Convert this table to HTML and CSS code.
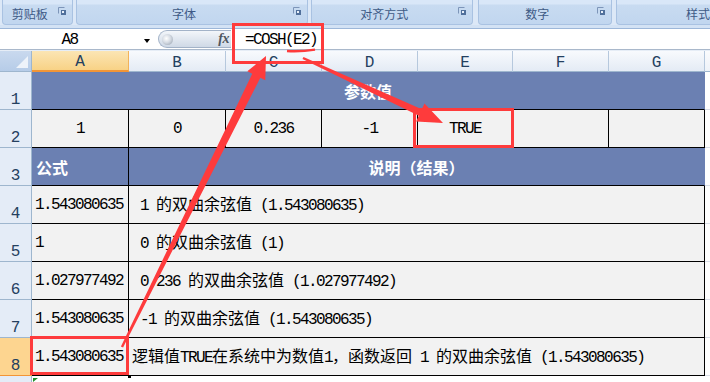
FILE: index.html
```html
<!DOCTYPE html>
<html lang="zh-CN">
<head>
<meta charset="utf-8">
<title>COSH</title>
<link rel="stylesheet" href="styles.css">
</head>
<body>
<div class="app">
  <div class="ribbon">
    <div class="grp g1"><span class="glabel">剪贴板</span><svg class="launch" viewBox="0 0 8 8"><path d="M0.5 6.5V0.5H6.5" fill="none" stroke="#7d95b9"/><rect x="3" y="3" width="5" height="5" fill="#51709b"/><rect x="4" y="4" width="2" height="2" fill="#e9f0f9"/></svg></div>
    <div class="grp g2"><span class="glabel">字体</span><svg class="launch" viewBox="0 0 8 8"><path d="M0.5 6.5V0.5H6.5" fill="none" stroke="#7d95b9"/><rect x="3" y="3" width="5" height="5" fill="#51709b"/><rect x="4" y="4" width="2" height="2" fill="#e9f0f9"/></svg></div>
    <div class="grp g3"><span class="glabel">对齐方式</span><svg class="launch" viewBox="0 0 8 8"><path d="M0.5 6.5V0.5H6.5" fill="none" stroke="#7d95b9"/><rect x="3" y="3" width="5" height="5" fill="#51709b"/><rect x="4" y="4" width="2" height="2" fill="#e9f0f9"/></svg></div>
    <div class="grp g4"><span class="glabel">数字</span><svg class="launch" viewBox="0 0 8 8"><path d="M0.5 6.5V0.5H6.5" fill="none" stroke="#7d95b9"/><rect x="3" y="3" width="5" height="5" fill="#51709b"/><rect x="4" y="4" width="2" height="2" fill="#e9f0f9"/></svg></div>
    <div class="grp g5"><span class="glabel">样式</span></div>
  </div>
  <div class="strip"></div>
  <div class="fbar">
    <div class="namebox">A8</div>
    <div class="dd"><i class="tri"></i></div>
    <div class="capsule"><span class="knob"></span><span class="fx">fx</span></div>
    <div class="formula">=COSH(E2)</div>
  </div>
  <div class="gap"></div>

  <div class="sheet">
    <div class="row hdr">
      <div class="corner"><i class="ctri"></i></div>
      <div class="colh wa sel">A</div>
      <div class="colh wb">B</div>
      <div class="colh wc">C</div>
      <div class="colh wd">D</div>
      <div class="colh we">E</div>
      <div class="colh wf">F</div>
      <div class="colh wg">G</div>
      <div class="colh wh"></div>
    </div>

    <div class="row">
      <div class="rh">1</div>
      <div class="cell blue wag center"><span class="t zh b">参数值</span></div>
      <div class="cell wh blank"></div>
    </div>

    <div class="row">
      <div class="rh">2</div>
      <div class="cell wa center"><span class="t">1</span></div>
      <div class="cell wb center"><span class="t">0</span></div>
      <div class="cell wc center"><span class="t">0.236</span></div>
      <div class="cell wd center"><span class="t">-1</span></div>
      <div class="cell we center"><span class="t">TRUE</span></div>
      <div class="cell wf"></div>
      <div class="cell wg"></div>
      <div class="cell wh blank"></div>
    </div>

    <div class="row">
      <div class="rh">3</div>
      <div class="cell wa blue-a"><span class="t zh b">公式</span></div>
      <div class="cell blue wbg center"><span class="t zh b">说明（结果）</span></div>
      <div class="cell wh blank"></div>
    </div>

    <div class="row">
      <div class="rh">4</div>
      <div class="cell wa"><span class="t">1.543080635</span></div>
      <div class="cell wbg"><span class="t">&nbsp;1 <span class="zh">的双曲余弦值</span> (1.543080635)</span></div>
      <div class="cell wh blank"></div>
    </div>

    <div class="row">
      <div class="rh">5</div>
      <div class="cell wa"><span class="t">1</span></div>
      <div class="cell wbg"><span class="t">&nbsp;0 <span class="zh">的双曲余弦值</span> (1)</span></div>
      <div class="cell wh blank"></div>
    </div>

    <div class="row">
      <div class="rh">6</div>
      <div class="cell wa"><span class="t">1.027977492</span></div>
      <div class="cell wbg"><span class="t">&nbsp;0.236 <span class="zh">的双曲余弦值</span> (1.027977492)</span></div>
      <div class="cell wh blank"></div>
    </div>

    <div class="row">
      <div class="rh">7</div>
      <div class="cell wa"><span class="t">1.543080635</span></div>
      <div class="cell wbg"><span class="t">&nbsp;-1 <span class="zh">的双曲余弦值</span> (1.543080635)</span></div>
      <div class="cell wh blank"></div>
    </div>

    <div class="row">
      <div class="rh sel">8</div>
      <div class="cell wa"><span class="t">1.543080635</span></div>
      <div class="cell wbg"><span class="t"><span class="zh">逻辑值</span>TRUE<span class="zh">在系统中为数值</span>1<span class="zh">，函数返回</span> 1 <span class="zh">的双曲余弦值</span> (1.543080635)</span></div>
      <div class="cell wh blank"></div>
    </div>

    <div class="row">
      <div class="rh"></div>
      <div class="cell wa blank"></div>
      <div class="cell wbg blank"></div>
      <div class="cell wh blank"></div>
    </div>
  </div>

  <svg class="marks" width="710" height="382" viewBox="0 0 710 382">
    <g fill="none" stroke="#fe3b3c" stroke-width="3">
      <rect x="233.5" y="24.5" width="89" height="38"/>
      <rect x="414.5" y="109.5" width="98" height="37"/>
      <rect x="31.5" y="337.5" width="96" height="36"/>
    </g>
    <path d="M287 51 Q301 51.8 315 49.6" fill="none" stroke="#fe3b3c" stroke-width="2.4"/>
    <polygon fill="#fe3b3c" points="120.92,346.47 123.08,347.53 260.32,77.72 265.25,80.15 266,56 247.31,71.31 252.24,73.74"/>
    <polygon fill="#fe3b3c" points="302.49,59.09 418.83,115.67 416.09,121.57 443,123 424.51,103.43 421.77,109.33 303.51,56.91"/>
    <rect x="128" y="375" width="3" height="3" fill="#000"/>
    <polygon points="33,378 38,378 33,382" fill="#1f8f2b"/>
  </svg>
</div>
</body>
</html>
```

FILE: styles.css
```css
* { box-sizing: border-box; }
html, body { margin: 0; padding: 0; }
body {
  width: 710px;
  height: 382px;
  overflow: hidden;
  background: #fff;
  font-family: "Liberation Mono", "Noto Sans CJK SC", monospace;
}
.app { position: relative; width: 710px; height: 382px; overflow: hidden; }

/* ribbon */
.ribbon { display: flex; height: 25px; background: #dce8f7; }
.grp {
  display: flex;
  align-items: flex-start;
  height: 25px;
  border: 1px solid #a9c2e2;
  border-top: 0;
  border-radius: 0 0 4px 4px;
  background: linear-gradient(#d9e7f8 0, #d9e7f8 4px, #c8dbf1 5px, #c1d6ef 100%);
}
.g1 { margin-left: 2px; width: 72px; }
.g2 { margin-left: 3px; width: 234px; }
.g3 { margin-left: 3px; width: 164px; }
.g4 { margin-left: 5px; width: 135px; }
.g5 { margin-left: 4px; flex: 1; padding-left: 69px; border-right: 0; border-radius: 0 0 0 4px; }
.glabel {
  flex: 1;
  text-align: center;
  font: 12px/17px "Noto Sans CJK SC", sans-serif;
  color: #3e5a86;
  margin-top: 5px;
  white-space: nowrap;
}
.g5 .glabel { text-align: left; }
.launch { width: 8px; height: 8px; margin: 7px 6px 0 2px; display: block; flex: none; }

.strip { height: 4px; background: #d3e2f4; border-bottom: 1px solid #9db7d9; }

/* formula bar */
.fbar { display: flex; height: 21px; background: #fff; border-bottom: 1px solid #a9b8cb; }
.namebox {
  width: 139px;
  text-align: center;
  font-size: 16px;
  letter-spacing: -1.6px;
  line-height: 20px;
  padding-top: 1px;
  color: #000;
}
.dd { width: 19px; display: flex; align-items: center; padding-left: 5px; padding-top: 3px; }
.tri {
  display: block;
  width: 0; height: 0;
  border-left: 3.5px solid transparent;
  border-right: 3.5px solid transparent;
  border-top: 4px solid #000;
}
.capsule {
  width: 73px;
  height: 18px;
  margin-top: 1px;
  display: flex;
  align-items: center;
  justify-content: space-between;
  padding: 0 2px 0 3px;
  border: 1px solid #a3b3c8;
  border-right: 0;
  border-radius: 9px 0 0 9px;
  background: linear-gradient(#f3f6fa, #dfe6ef 55%, #cfd9e6);
}
.knob {
  width: 11px; height: 11px;
  border-radius: 50%;
  background: radial-gradient(circle at 40% 40%, #ffffff 0, #d5dbe3 45%, #8e99a7 100%);
}
.fx {
  font: italic bold 14px/16px "Liberation Serif", serif;
  color: #4f565f;
  letter-spacing: -0.5px;
}
.formula {
  flex: 1;
  padding-left: 14px;
  font-size: 16px;
  letter-spacing: -1.6px;
  line-height: 20px;
  padding-top: 1px;
  color: #000;
}
.gap { height: 1px; background: #e6edf6; }

/* sheet */
.sheet { display: flex; flex-direction: column; }
.row { display: flex; height: 38px; flex: none; }
.row.hdr { height: 21px; }

.wa { width: 97px; }
.wb { width: 97px; }
.wc { width: 96px; }
.wd { width: 96px; }
.we { width: 95px; }
.wf { width: 96px; }
.wg { width: 96px; }
.wh { flex: 1; }
.wag { width: 673px; }
.wbg { width: 576px; }

.corner {
  width: 32px;
  background: linear-gradient(#c9d9ee, #b6cce8);
  border-right: 1px solid #9eb6ce;
  border-bottom: 1px solid #9eb6ce;
  display: flex;
  align-items: flex-end;
  justify-content: flex-end;
  padding: 0 3px 3px 0;
}
.ctri {
  display: block;
  width: 0; height: 0;
  border-left: 12px solid transparent;
  border-bottom: 12px solid #eef3fa;
}
.colh {
  display: flex;
  align-items: center;
  justify-content: center;
  padding-top: 3px;
  background: linear-gradient(#f8fafd, #e4ebf5);
  border-right: 1px solid #b6c8dd;
  border-bottom: 1px solid #9eb6ce;
  font-size: 16px;
  color: #24405f;
}
.colh.sel {
  background: linear-gradient(#fbe5b4, #f8d286);
  border-right-color: #f2b35a;
  border-bottom: 2px solid #f29536;
}
.colh.wh { border-right: 0; background: linear-gradient(#fafbfd, #eef2f8); }

.rh {
  width: 32px;
  flex: none;
  display: flex;
  align-items: flex-end;
  justify-content: center;
  padding-bottom: 1px;
  background: #e4ecf7;
  border-right: 1px solid #9eb6ce;
  border-bottom: 1px solid #9eb6ce;
  font-size: 16px;
  line-height: 16px;
  color: #24405f;
}
.rh.sel { background: #fdd590; border-bottom-color: #f29536; border-right-color: #f29536; }

.cell {
  flex: none;
  display: flex;
  align-items: center;
  padding-left: 3px;
  overflow: hidden;
  background: #f2f2f2;
  border-right: 1px solid #000;
  border-bottom: 1px solid #000;
  color: #000;
}
.t {
  white-space: pre;
  font-size: 16px;
  line-height: 20px;
  letter-spacing: -1.6px;
}
.cell.wh { flex: 1; }
.cell.center { justify-content: center; padding-left: 0; }
.cell.blank { background: #fff; border-right: 0; border-bottom: 1px solid #d9dee7; }
.cell.blue { background: #6b80b2; border-right-color: #6b80b2; color: #fff; }
.cell.blue-a { background: #6b80b2; color: #fff; padding-left: 4px; }

.zh {
  font-family: "Noto Sans CJK SC", sans-serif;
  font-size: 16px;
  letter-spacing: 0;
}
.zh.b { font-weight: bold; }

.marks { position: absolute; left: 0; top: 0; pointer-events: none; }
```
